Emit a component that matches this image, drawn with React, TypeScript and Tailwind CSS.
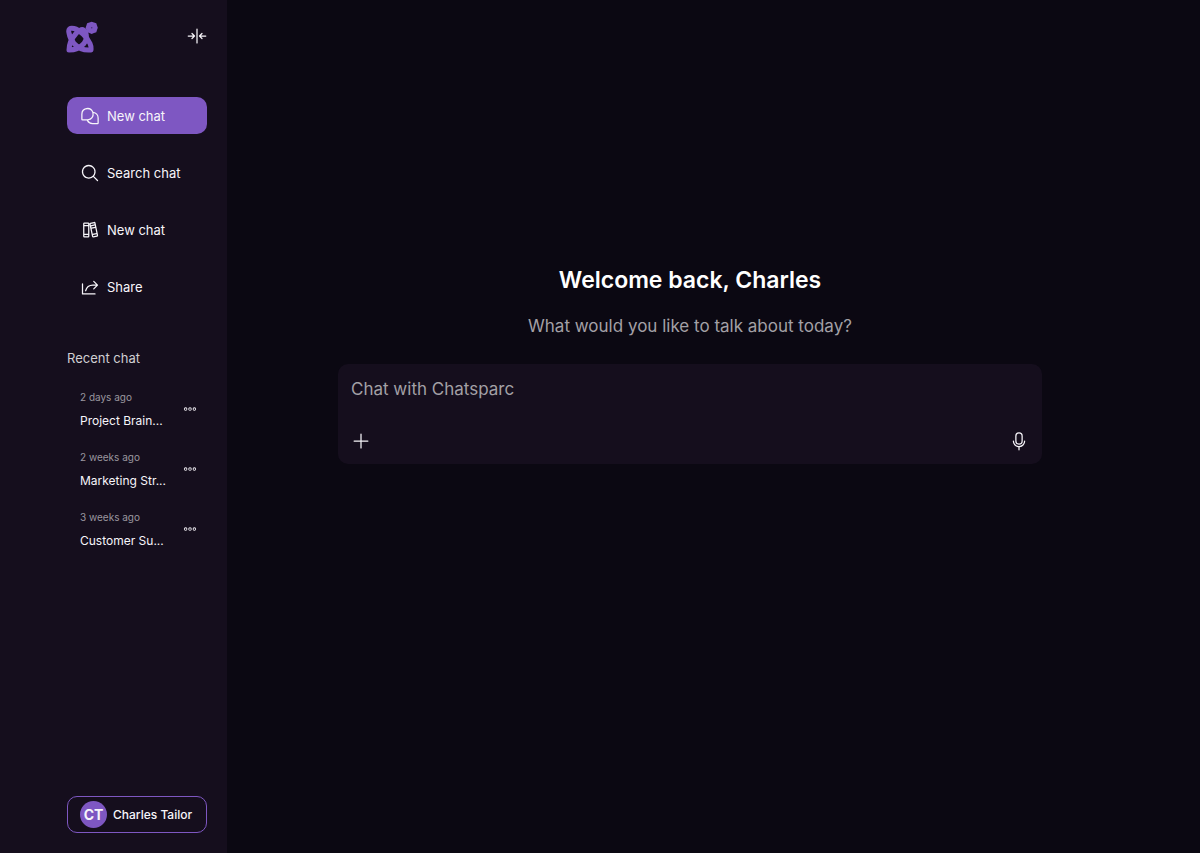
import React, { useState } from "react";
import {
  PiArrowsInLineHorizontal,
  PiBooks,
  PiChatsTeardrop,
  PiDotsThreeOutline,
  PiMagnifyingGlass,
  PiMicrophone,
  PiPlus,
  PiShare,
} from "react-icons/pi";

const navItems = [
  { id: "new", label: "New chat", icon: PiChatsTeardrop },
  { id: "search", label: "Search chat", icon: PiMagnifyingGlass },
  { id: "library", label: "New chat", icon: PiBooks },
  { id: "share", label: "Share", icon: PiShare },
];

const recentChats = [
  { time: "2 days ago", title: "Project Brain..." },
  { time: "2 weeks ago", title: "Marketing Str..." },
  { time: "3 weeks ago", title: "Customer Su..." },
];

function Logo() {
  return (
    <svg viewBox="0 0 32 32" className="size-8" fill="none" aria-hidden="true">
      <g stroke="#7e57c2" strokeWidth="5" strokeLinejoin="round">
        <path d="M3 12C2 8 4 6.500 8 7.500C14 9 21 16 24 22.500C25.300 25.500 25 29 25 29C20 29.500 13 28 8 22.500C5 19 3.500 15 3 12Z" />
        <path d="M3 29C3 23 6 17 10 12.500C13 9.500 15.500 7.500 17.500 9C21 12 21.500 18 18 22.500C14 27 9 29 3 29Z" />
      </g>
      <path
        d="M25.700 0.700L28 1.500L30.300 2.300L31 4.600L31.800 6.800L31 9L30.300 11.300L28 12.100L25.700 12.900L23.400 12.100L21.100 11.300L20.400 9L19.600 6.800L20.400 4.600L21.100 2.300L23.400 1.500Z"
        fill="#7e57c2"
      />
      <circle cx="25.700" cy="6.800" r="0.800" fill="#4a3278" />
    </svg>
  );
}

function Sidebar() {
  const [active, setActive] = useState("new");

  return (
    <aside className="flex w-[227px] shrink-0 flex-col bg-[#150e1d] pt-[21px] pr-5 pb-5 pl-[67px]">
      <div className="flex items-start justify-between">
        <a href="#" aria-label="Chatsparc" className="-ml-px">
          <Logo />
        </a>
        <button
          type="button"
          aria-label="Collapse sidebar"
          className="mt-[5px]"
        >
          <PiArrowsInLineHorizontal className="size-5" />
        </button>
      </div>

      <nav className="mt-11 flex flex-col gap-5">
        {navItems.map(({ id, label, icon: Icon }) => (
          <button
            key={id}
            type="button"
            onClick={() => setActive(id)}
            className={
              "flex h-[37px] items-center gap-[7px] rounded-[10px] px-[13px] text-[13px] leading-5 " +
              (active === id ? "bg-[#7e57c2]" : "")
            }
          >
            <Icon className="size-5" />
            {label}
          </button>
        ))}
      </nav>

      {/* Recent chats */}
      <h2 className="mt-11 text-[13px] leading-[18px] text-[#d0ced2]">
        Recent chat
      </h2>
      <ul className="mt-[22px] flex flex-col gap-5">
        {recentChats.map((chat) => (
          <li
            key={chat.title}
            className="flex h-10 items-center justify-between pr-2.5 pl-[13px]"
          >
            <a href="#" className="flex flex-col gap-2">
              <span className="text-[10px] leading-4 text-[#9a969f]">
                {chat.time}
              </span>
              <span className="text-xs">{chat.title}</span>
            </a>
            <button type="button" aria-label={"Options for " + chat.title}>
              <PiDotsThreeOutline className="size-3.5" />
            </button>
          </li>
        ))}
      </ul>

      <button
        type="button"
        className="mt-auto flex h-[37px] items-center gap-1.5 rounded-[10px] border border-[#7e57c2] px-3 text-xs font-medium"
      >
        <span className="flex size-[27px] items-center justify-center rounded-full bg-[#7e57c2] text-sm font-bold">
          CT
        </span>
        Charles Tailor
      </button>
    </aside>
  );
}

function ChatBox() {
  return (
    <form className="mt-[26px] w-full max-w-[704px] rounded-[10px] bg-[#150e1d] p-[13px]">
      <textarea
        rows={1}
        aria-label="Chat with Chatsparc"
        placeholder="Chat with Chatsparc"
        className="block h-[54px] w-full resize-none text-[17px] leading-6 outline-none placeholder:text-[#a3a0a6]"
      />
      <div className="flex items-center justify-between">
        <button type="button" aria-label="Add attachment">
          <PiPlus className="size-5" />
        </button>
        <button type="button" aria-label="Use microphone">
          <PiMicrophone className="size-5" />
        </button>
      </div>
    </form>
  );
}

export default function App() {
  return (
    <div className="flex min-h-screen bg-[#0b0812] font-['Inter',sans-serif] text-[#f7f5fa]">
      <Sidebar />
      <main className="flex flex-1 flex-col items-center justify-center pr-[47px] pb-[125px]">
        <h1 className="text-[23px] leading-8 font-semibold text-white">
          Welcome back, Charles
        </h1>
        <p className="mt-[18px] text-[17px] leading-6 text-[#a3a0a6]">
          What would you like to talk about today?
        </p>
        <ChatBox />
      </main>
    </div>
  );
}
